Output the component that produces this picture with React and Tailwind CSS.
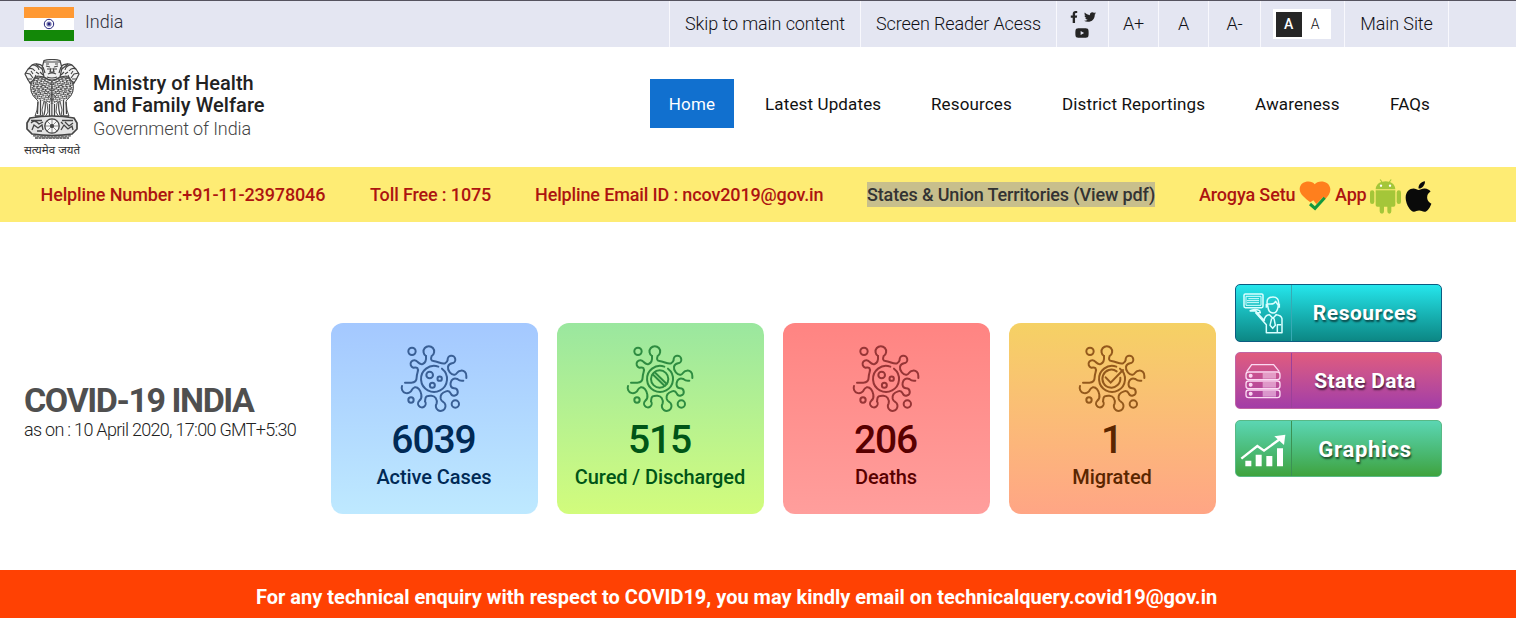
import { FaFacebookF, FaTwitter, FaYoutube, FaApple } from "react-icons/fa";

function Flag() {
  return (
    <svg width="50" height="34" viewBox="0 0 50 34">
      <rect width="50" height="11" fill="#ff9933" />
      <rect y="11" width="50" height="12" fill="#fff" />
      <rect y="23" width="50" height="11" fill="#138808" />
      <circle cx="25" cy="17" r="4.7" fill="none" stroke="#23237a" strokeWidth="1" />
      <circle cx="25" cy="17" r="2.6" fill="#7d7db5" />
      <circle cx="25" cy="17" r="1.3" fill="#23237a" />
    </svg>
  );
}

function Lions() {
  const side = (
    <g>
      <path d="M20 8 Q14 3 8 6 L4 10 L1 15 L4 21 L7 25 Q10 19 14 17 L20 18 Z" fill="#f4f4f4" strokeWidth="1.2" />
      <path d="M1 14 L6 15 L9 19 M4 10 Q8 8 11 12 M8 6 Q14 6 15 11 M12 5 L18 10 M5 24 Q10 22 12 16 M3 20 L8 20 M7 12 L9 15 M12 13 L15 15 M16 13 L19 16" strokeWidth="1.1" />
      <path d="M7 24 Q5 34 12 40 L14 42 L13 51 L11 57 H19 L18 51 L20 42 L23 44 L24 53 L21 58 H28 V22 L18 18 Q10 18 7 24 Z" fill="#f6f6f6" />
      <path d="M7 24 Q5 34 12 40 L20 42 L28 45 V22 L18 18 Q10 18 7 24 Z" fill="url(#curls)" stroke="none" />
      <path d="M10 21 Q8 31 14 38 M14 19 Q11 28 18 37 M18 19 Q15 27 22 35" strokeDasharray="1.4 1.3" strokeWidth="1.1" />
      <path d="M14 43 L13.5 55 M16.5 41 V56 M21 43 Q22 48 20 56 M25.5 45 V57 M11 57 H20 M21 58 H27" strokeWidth="1.2" />
    </g>
  );
  return (
    <svg width="56" height="81" viewBox="0 0 56 81" fill="none" stroke="#444" strokeWidth="0.9">
      <defs>
        <pattern id="curls" width="3.1" height="2.7" patternUnits="userSpaceOnUse" patternTransform="rotate(33)">
          <path d="M0 .8 Q.8 -.4 1.6 .8 T3.1 .8 M.8 2.2 L2.3 1.7" stroke="#4a4a4a" strokeWidth=".8" fill="none" />
        </pattern>
      </defs>
      {side}
      <g transform="translate(56 0) scale(-1 1)">{side}</g>
      <path d="M20 1.5 Q28 -.5 36 1.5 L38 9 L36 18 Q28 24 20 18 L18 9 Z" fill="#f0f0f0" strokeWidth="1.2" />
      <path d="M20 3 H36 M22 7 L26 8 M34 7 L30 8 M23 10 H26 M30 10 H33 M27 9 L26 13 H30 L29 9 M24 15 Q28 13 32 15 M23 18 Q28 20 33 18 M19 8 L21 14 M37 8 L35 14 M22 5 H25 M31 5 H34" strokeWidth="1.2" />
      <path d="M20 21 L28 26 L36 21 M19 26 L28 32 L37 26 M21 31 L28 37 L35 31 M24 37 L28 41 L32 37" strokeWidth="1" strokeDasharray="1.6 .9" />
      <path d="M6 59 Q28 55 50 59 L53 64 V70 L48 75 Q28 78 8 75 L3 70 V64 Z" fill="#e4e4e4" strokeWidth="1.7" />
      <circle cx="28" cy="67" r="7.2" fill="#f8f8f8" strokeWidth="1.3" />
      <circle cx="28" cy="67" r="1.6" fill="#555" />
      <path d="M28 60 V74 M21 67 H35 M23 62 L33 72 M33 62 L23 72" strokeWidth=".6" />
      <path d="M7 64 Q11 60 15 65 L19 63 M8 71 L10 66 L14 69 L18 66 L19 71 M13 72 H18 M41 63 L45 67 L49 64 M37 71 L40 66 L44 70 L48 67 L49 71 M37 63 L39 65 M7 61.5 H18 M38 61.5 H49" strokeWidth="1.3" />
      <path d="M9 76.5 Q28 79.5 47 76.5 M11 79 H45" strokeWidth="1.8" stroke="#777" strokeDasharray="3 .5" />
    </svg>
  );
}

function Virus({ color, children }) {
  return (
    <svg width="68" height="68" viewBox="30 29 204 204" fill="none" stroke={color} strokeWidth="6" strokeLinecap="round" className="-ml-px">
      <path d="M108 62 A16 16 0 1 1 125 62 C122 70 122 76 130 77 C145 79 157 88 165 84 Q172 80 173 74 A11.5 11.5 0 1 1 186 84 Q176 86 174 94 C172 106 184 120 194 118 C202 117 200 107 212 106 A14 15 0 0 1 229 122 V128" />
      <path d="M220 136 Q210 138 202 131 Q186 126 182 142 C180 152 184 158 192 159 A11 11 0 1 1 182 174 Q178 165 168 168 C156 172 150 180 152 190 Q154 197 160 200 A14.5 14.5 0 1 1 140 204 Q142 196 137 188 C132 180 118 180 110 183 C104 187 107 192 105 198 A11.5 11.5 0 1 1 88 196 Q96 190 94 178 C92 165 84 154 74 156 Q68 158 66 163 A15.5 15.5 0 0 1 36 152" />
      <path d="M45 142 H64 Q80 142 80 126 C80 112 88 105 82 98 Q78 95 70 97 A11.5 11.5 0 1 1 83 80 Q90 88 98 86 C108 82 109 72 108 62" />
      <path d="M156 100 A39 39 0 1 1 145 94" />
      <circle cx="66" cy="48" r="11" />
      <circle cx="63" cy="194" r="8" />
      <circle cx="196" cy="206" r="11" />
      {children}
    </svg>
  );
}

const spots = (
  <g>
    <circle cx="119" cy="119" r="10" />
    <circle cx="149" cy="130" r="6.5" />
    <circle cx="127" cy="150" r="7.5" />
  </g>
);
const barred = (
  <g>
    <circle cx="131" cy="131" r="26" />
    <path d="M110 117 L146 152 M116 111 L152 146" />
  </g>
);
const checked = (
  <g>
    <path d="M146 108 A27 27 0 1 0 157 127" />
    <path d="M113 126 L128 142 L165 104" />
  </g>
);

function Stat({ box, text, icon, n, label, children }) {
  return (
    <div className={"flex h-[191px] w-[207px] flex-col items-center rounded-xl pt-[21.5px] " + box}>
      <Virus color={icon}>{children}</Virus>
      <div className={"mt-[7.5px] mr-[2px] text-[39px] leading-[40px] font-medium tracking-[-1.1px] " + text}>{n}</div>
      <div className={"mt-[5px] mr-px text-[20px] leading-6 font-medium tracking-[-0.08px] whitespace-nowrap " + text}>{label}</div>
    </div>
  );
}

function Side({ box, divider, font, label, children }) {
  return (
    <div className={"flex w-[207px] items-center rounded-[5px] border " + box}>
      <div className={"flex h-full w-[56px] items-center justify-center border-r pr-[2px] " + divider}>{children}</div>
      <div className={"flex-1 pt-[2px] pr-[3px] text-center font-bold text-white [text-shadow:1px_2px_2px_rgba(0,0,0,.6)] " + font}>{label}</div>
    </div>
  );
}

function Presenter() {
  return (
    <svg width="40" height="41" viewBox="0 0 120 123" fill="none" stroke="#d9ffff" strokeWidth="4.5" strokeLinejoin="round">
      <rect x="3" y="3" width="57" height="41" rx="4" />
      <path d="M9 10 H54 V37 H9 Z M16 17 H48 M12 23 H48 M12 29 H48" strokeWidth="3" />
      <path d="M20 54 Q34 46 50 53 L52 59 H38 L70 95 V119 H117 V77 Q115 66 98 65 M78 65 Q66 66 63 82 M20 54 H38 L65 84" />
      <path d="M72 28 Q72 12 90 12 Q108 12 107 32 L105 43 Q102 60 90 60 Q77 59 75 43 Z M74 32 Q93 36 98 25 L105 36 M70 32 V44 M109 32 V44" />
      <path d="M78 64 L90 76 L101 64 M86 76 L81 97 L89 106 L97 97 L93 76 M103 119 V95 H115" />
    </svg>
  );
}

function Servers() {
  return (
    <svg width="36" height="36" viewBox="0 0 108 108" fill="none" stroke="#fbd9f2" strokeWidth="4">
      <path d="M5 26 L20 5 H86 L103 26" />
      {[27, 54, 81].map((y) => (
        <g key={y}>
          <rect x="3" y={y} width="102" height="23" rx="8" />
          <circle cx="17" cy={y + 11.5} r="4" fill="#fbd9f2" />
          <rect x="53" y={y + 3} width="40" height="17" fill="#fbd9f2" fillOpacity=".55" stroke="none" />
        </g>
      ))}
    </svg>
  );
}

function Growth() {
  return (
    <svg width="46" height="33" viewBox="0 0 138 99" fill="#fff" className="mt-1">
      <path d="M16 80 h18 v17 h-18z M47 62 h18 v35 h-18z M79 66 h18 v31 h-18z M111 43 h18 v54 h-18z" />
      <path d="M4 74 L52 36 L72 50 L120 15" fill="none" stroke="#fff" strokeWidth="7" />
      <path d="M103 7 L136 2 L132 33 Z" />
    </svg>
  );
}

function Heart() {
  return (
    <svg width="32" height="30" viewBox="0 0 96 90">
      <path d="M47 10 C56 -4 92 -2 94 24 C94 38 86 47 78 55 L73 48 L52 69 L43 58 L34 64 C18 51 2 40 2 24 C3 -1 38 -4 47 10 Z" fill="#ff7f1d" />
      <path d="M33 69 L48 82 L77 50" fill="none" stroke="#13983f" strokeWidth="9" />
    </svg>
  );
}

function Android() {
  return (
    <svg width="31" height="35" viewBox="0 0 93 105" fill="#a4c639">
      <path d="M17 31 Q18 14 34 9 L29 2 L32 1 L37 8 Q47 5 57 8 L62 1 L65 2 L60 9 Q75 15 76 31 Z M17 34 H76 V78 Q76 83 71 83 H64 V97 Q64 104 58 104 Q52 104 52 97 V83 H42 V97 Q42 104 36 104 Q29 104 29 97 V83 H22 Q17 83 17 78 Z" />
      <rect y="34" width="13" height="41" rx="6.5" />
      <rect x="80" y="34" width="13" height="41" rx="6.5" />
      <circle cx="33" cy="20" r="3.5" fill="#fff" />
      <circle cx="60" cy="20" r="3.5" fill="#fff" />
    </svg>
  );
}

export default function App() {
  return (
    <div className="h-[618px] w-[1516px] overflow-hidden bg-white font-['Roboto',sans-serif] whitespace-nowrap">
      <div className="flex h-[47px] justify-between border-t border-[#55535f] bg-[#e4e6f2] text-[18px] font-light text-[#111116]">
        <div className="flex pt-[6px] pl-6">
          <Flag />
          <span className="pt-[1px] pl-[11px] text-[#30303a]">India</span>
        </div>
        <div className="flex pr-[67px] tracking-[-0.1px] [&>div]:flex [&>div]:items-center [&>div]:justify-center [&>div]:border-l [&>div]:border-[#f8f8fd]">
          <div className="w-[191px] pb-[2px]">Skip to main content</div>
          <div className="w-[196px] pb-[2px]">Screen Reader Acess</div>
          <div className="w-[52px] flex-wrap content-center gap-x-[4px] gap-y-[3px] pt-[3px] pr-[10px] pl-2 text-[#252525]">
            <FaFacebookF size={12} />
            <FaTwitter size={12} />
            <FaYoutube size={14} />
          </div>
          <div className="w-[50px] pb-[2px]">A+</div>
          <div className="w-[50px] pb-[2px]">A</div>
          <div className="w-[52px] pb-[2px]">A-</div>
          <div className="w-[84px] pr-[2px]">
            <div className="flex h-[30px] w-[58px] items-center bg-white pl-[3px] text-[14px]">
              <span className="flex h-[25px] w-[26px] items-center justify-center bg-[#262626] font-medium text-white">A</span>
              <span className="w-[27px] text-center">A</span>
            </div>
          </div>
          <div className="w-[104px] pb-[2px]">Main Site</div>
          <div className="w-px" />
        </div>
      </div>

      <div className="flex h-[120px] justify-between">
        <div className="flex pl-6">
          <div className="flex w-[56px] flex-col items-center pt-[12px]">
            <Lions />
            <span className="text-[11.6px] leading-[20px] font-['Noto_Sans',sans-serif] text-[#333]">सत्यमेव जयते</span>
          </div>
          <div className="pt-[25px] pl-[13px] text-[20px] leading-[22px] text-[#222]">
            <div className="font-medium tracking-[0.06px]">Ministry of Health</div>
            <div className="font-medium tracking-[0.06px]">and Family Welfare</div>
            <div className="pt-[2px] text-[18px] font-light tracking-[-0.12px] text-[#444]">Government of India</div>
          </div>
        </div>
        <div className="mt-8 flex h-[49px] items-center self-start pr-[86px] text-[17px] tracking-[0.14px] text-[#111] [&>div]:pt-[2px]">
          <div className="mr-[31px] flex h-[49px] w-[84px] items-center justify-center bg-[#1170cf] text-white">Home</div>
          <div className="w-[166px]">Latest Updates</div>
          <div className="w-[131px]">Resources</div>
          <div className="w-[193px]">District Reportings</div>
          <div className="w-[135px]">Awareness</div>
          <div className="w-[40px]">FAQs</div>
        </div>
      </div>

      <div className="flex h-[55px] items-center bg-[#feec74] pl-[40.5px] text-[18px] font-medium tracking-[-0.14px] text-[#ad1410]">
        <div className="w-[329.5px]">Helpline Number :+91-11-23978046</div>
        <div className="w-[165px]">Toll Free : 1075</div>
        <div className="w-[332px]">Helpline Email ID : ncov2019@gov.in</div>
        <div className="mr-[44px] flex h-[25px] w-[288px] items-center bg-[#c8bf8c] text-[#333]">States &amp; Union Territories (View pdf)</div>
        <div className="flex items-center">
          <span className="w-[100px]">Arogya Setu</span>
          <span className="mt-[3px]"><Heart /></span>
          <span className="w-[35px] pl-1">App</span>
          <span className="mt-1 ml-1"><Android /></span>
          <FaApple size={35} className="mt-1 text-[#0a0a0a]" />
        </div>
      </div>

      <div className="flex h-[348px]">
        <div className="w-[331px] pt-[159px] pl-6">
          <div className="text-[34px] leading-[38px] font-bold tracking-[-1.43px] text-[#4f4f4f]">COVID-19 INDIA</div>
          <div className="pt-px text-[18px] leading-5 font-light tracking-[-0.7px] text-[#222]">as on : 10 April 2020, 17:00 GMT+5:30</div>
        </div>
        <div className="flex gap-[19px] pt-[101px]">
          <Stat box="bg-linear-to-b from-[#a4c8ff] to-[#bee9ff]" text="text-[#002a56]" icon="#395f95" n="6039" label="Active Cases">{spots}</Stat>
          <Stat box="bg-linear-to-b from-[#9ae79f] to-[#d2fc7c]" text="text-[#005517]" icon="#2e8c41" n="515" label="Cured / Discharged">{barred}</Stat>
          <Stat box="bg-linear-to-b from-[#ff8482] to-[#ff9e9c]" text="text-[#580000]" icon="#973536" n="206" label="Deaths">{spots}</Stat>
          <Stat box="bg-linear-to-b from-[#f5d164] to-[#ffa585]" text="text-[#5a2600]" icon="#94591c" n="1" label="Migrated">{checked}</Stat>
        </div>
        <div className="flex flex-col pt-[62px] pl-[19px]">
          <Side box="mb-[10px] h-[58px] bg-linear-to-b from-[#25e6ec] to-[#0c8784] border-[#0b5c81]" divider="border-[#37aab4]" font="text-[21px] tracking-[0.5px]" label="Resources"><Presenter /></Side>
          <Side box="mb-[11px] h-[57px] bg-linear-to-b from-[#e05b7e] to-[#a33ca7] border-[#c064a4]" divider="border-[#9b409a]" font="text-[21px] tracking-[0.35px]" label="State Data"><Servers /></Side>
          <Side box="h-[57px] bg-linear-to-b from-[#5bd6b3] to-[#3fa33c] border-[#58b986]" divider="border-[#3b9154]" font="text-[22px] tracking-[0.7px]" label="Graphics"><Growth /></Side>
        </div>
      </div>

      <div className="h-[48px] bg-[#ff4103] pt-[13px] pl-[256px] text-[20px] leading-7 font-bold text-white">
        For any technical enquiry with respect to COVID19, you may kindly email on technicalquery.covid19@gov.in
      </div>
    </div>
  );
}
